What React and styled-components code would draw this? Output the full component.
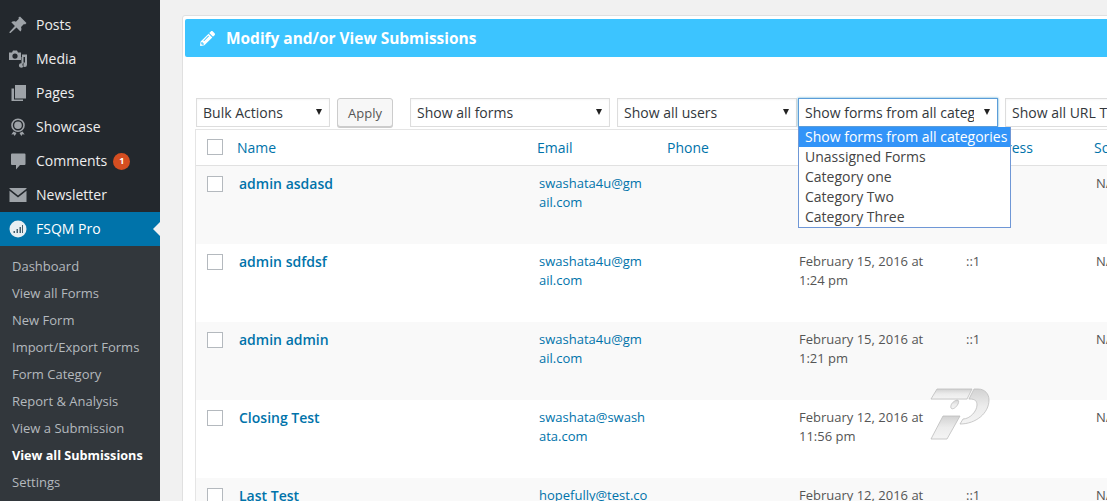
import React from "react";
import styled, { createGlobalStyle } from "styled-components";
import { FaPencilAlt } from "react-icons/fa";

const Global = createGlobalStyle`
  html, body { margin: 0; padding: 0; height: 100%; overflow: hidden; background: #f1f1f1; }
  #root { height: 501px; width: 1107px; overflow: hidden; }
  * { box-sizing: border-box; }
`;

const Page = styled.div`
  display: flex; position: relative; width: 1107px; height: 501px; overflow: hidden;
  font-family: "Open Sans", sans-serif; font-size: 14px; color: #444;
`;
const Sidebar = styled.nav`
  width: 160px; flex: none; background: #23282d; padding-top: 8px; display: flex; flex-direction: column;
`;
const MenuItem = styled.div`
  height: 34px; display: flex; align-items: center; position: relative; padding-left: 9px; gap: 9px;
  color: ${p => (p.$active ? "#fff" : "#eee")}; background: ${p => (p.$active ? "#0073aa" : "transparent")};
  font-size: 14px; line-height: 18px;
`;
const MenuIcon = styled.svg`
  width: 18px; height: 18px; flex: none; fill: #9ea3a8;
`;
const Badge = styled.span`
  width: 17px; height: 17px; border-radius: 50%; background: #d54e21; color: #fff;
  font-size: 9px; font-weight: 700; display: flex; align-items: center; justify-content: center; margin-left: -3px;
`;
const Notch = styled.span`
  position: absolute; right: 0; top: 10px; width: 0; height: 0;
  border: 7px solid transparent; border-right-color: #f1f1f1; border-left-width: 0;
`;
const SubMenu = styled.div`
  background: #32373c; padding-top: 7px; flex: 1;
`;
const SubItem = styled.div`
  height: 27px; line-height: 27px; padding-left: 12px; font-size: ${p => (p.$current ? "12.65px" : "13px")};
  color: ${p => (p.$current ? "#fff" : "#b4b9be")}; font-weight: ${p => (p.$current ? 700 : 400)};
`;
const Main = styled.main`
  flex: 1; min-width: 0; padding: 15px 0 0 22px;
`;
const Panel = styled.section`
  width: 960px; height: 600px; background: #fff; border: 1px solid #e0e0e0; border-radius: 3px; padding: 3px 0 0 2px;
`;
const PanelHeader = styled.header`
  height: 38px; background: #3cc4ff; border-radius: 2px; color: #fff; display: flex; align-items: center;
  padding-left: 15px; gap: 11px; font-size: 15.45px; font-weight: 700;
  svg { width: 15px; height: 15px; }
`;
const Toolbar = styled.div`
  display: flex; align-items: flex-start; margin: 41px 0 0 11px; height: 31px;
`;
const Select = styled.div`
  width: ${p => p.$w}px; height: 29px; flex: none; margin-left: ${p => p.$ml || 0}px;
  background: #fff; border: 1px solid ${p => (p.$focus ? "#5b9dd9" : "#ddd")};
  box-shadow: ${p => (p.$focus ? "0 0 2px rgba(30,140,190,.8)" : "inset 0 1px 2px rgba(0,0,0,.04)")};
  display: flex; align-items: center; padding: 0 6px; position: relative; color: #32373c; font-size: 14px; white-space: nowrap; overflow: hidden;
`;
const SelectText = styled.span`
  overflow: hidden; width: ${p => p.$tw || "auto"};
`;
const Arrow = styled.span`
  position: absolute; right: 7px; top: 10px; width: 0; height: 0;
  border-left: 3.5px solid transparent; border-right: 3.5px solid transparent; border-top: 6px solid #222;
`;
const ApplyButton = styled.div`
  width: 56px; height: 29px; margin-left: 7px; flex: none; border: 1px solid #ccc; border-radius: 3px; background: #f7f7f7;
  box-shadow: 0 1px 0 #ccc; color: #555; font-size: 13px; display: flex; align-items: center; justify-content: center;
`;
const Table = styled.div`
  margin-left: 10px; border-left: 1px solid #e5e5e5; border-top: 1px solid #e5e5e5;
`;
const cols = "41px 300px 130px 130px 167px 130px 100px";
const HeadRow = styled.div`
  display: grid; grid-template-columns: ${cols}; height: 36px; border-bottom: 1px solid #e1e1e1; align-items: center; color: #0073aa; font-size: 14px;
`;
const Row = styled.div`
  display: grid; grid-template-columns: ${cols}; height: 78px; background: ${p => (p.$alt ? "#f9f9f9" : "#fff")}; padding-top: 8px; font-size: 13px; line-height: 19px;
`;
const Check = styled.span`
  display: block; width: 16px; height: 16px; background: #fff; border: 1px solid #b4b9be; margin-left: 11px;
  margin-top: ${p => (p.$head ? "-2px" : "2px")};
`;
const RowName = styled.div`
  padding-left: 2px; color: #0073aa; font-weight: 600; font-size: 14px; line-height: 20px;
`;
const EmailCell = styled.div`
  padding: 0 18px 0 2px; color: #0073aa; word-break: break-all;
`;
const DateCell = styled.div`
  padding: 0 30px 0 2px; color: #555;
`;
const PlainCell = styled.div`
  padding: 0 0 0 2px; color: #555;
`;
const Dropdown = styled.div`
  position: absolute; left: 798px; top: 127px; width: 213px; height: 101px; background: #fff;
  border: 1px solid #6f97d6; border-top: none; color: #444; font-size: 14px; line-height: 20px;
`;
const Option = styled.div`
  height: 20px; padding-left: 6px; white-space: nowrap;
  background: ${p => (p.$sel ? "#3294f8" : "transparent")}; color: ${p => (p.$sel ? "#fff" : "#444")};
`;
const Watermark = styled.svg`
  position: absolute; left: 930px; top: 387px; width: 62px; height: 56px;
`;

const icons = {
  posts: <path d="M11 0.500l6.500 6.500-1.500 1.500-1-.6-3 3c.8 2 .5 3.400-.6 4.600L7.500 11.600 1.500 17H0.500v-1l5.400-6-3.600-3.700c1.200-1.100 2.800-1.300 4.600-.6l3-3-.6-1z" />,
  media: <path fillRule="evenodd" d="M0 2.500h3L4 .5h4l1 2h3V10H0zM6 3.500a2.600 2.600 0 100 5.200 2.600 2.600 0 000-5.200zM13 4.500h5v10.200a2.300 2.200 0 11-2-2.200V7h-1.500v8.500a2.300 2.200 0 11-2-2.200V7H13z" />,
  pages: <path d="M6 1h11v13.500H6zM2.500 4.500H5v11h9V17H2.500z" />,
  show: <path fillRule="evenodd" d="M9 0.500a6.800 6.800 0 110 13.600A6.800 6.800 0 019 .5zm0 1.600a5.200 5.200 0 100 10.400A5.200 5.200 0 009 2.100zm0 1.400a3.800 3.800 0 110 7.600 3.800 3.800 0 010-7.600zM4.500 13.500l3 1.400L5.700 18l-1.200-1.800-2.200.4zm9 0l2.200 3.100-2.200-.4L12.300 18l-1.800-3.100z" />,
  comments: <path d="M3 1.500h12.500a1 1 0 011 1v9.500a1 1 0 01-1 1H11l-4 4.500V13H3a1 1 0 01-1-1V2.500a1 1 0 011-1z" />,
  mail: <path d="M0.500 2h17v.8L9 9.500 .5 2.800zM.5 4.800L9 11.500l8.500-6.700V16H.5z" />,
};

const subItems = ["Dashboard", "View all Forms", "New Form", "Import/Export Forms", "Form Category", "Report & Analysis", "View a Submission", "View all Submissions", "Settings"];

const rows = [
  { name: "admin asdasd", email: "swashata4u@gmail.com", date: "", ip: "", alt: true },
  { name: "admin sdfdsf", email: "swashata4u@gmail.com", date: "February 15, 2016 at 1:24 pm", ip: "::1" },
  { name: "admin admin", email: "swashata4u@gmail.com", date: "February 15, 2016 at 1:21 pm", ip: "::1", alt: true },
  { name: "Closing Test", email: "swashata@swashata.com", date: "February 12, 2016 at 11:56 pm", ip: "" },
  { name: "Last Test", email: "hopefully@test.com", date: "February 12, 2016 at 11:50 pm", ip: "::1", alt: true },
];

export default function App() {
  return (
    <Page>
      <Global />
      <Sidebar>
        {[["Posts", "posts"], ["Media", "media"], ["Pages", "pages"], ["Showcase", "show"], ["Comments", "comments"], ["Newsletter", "mail"]].map(([t, i]) => (
          <MenuItem key={t}>
            <MenuIcon viewBox="0 0 18 18">{icons[i]}</MenuIcon>
            {t}
            {t === "Comments" && <Badge>1</Badge>}
          </MenuItem>
        ))}
        <MenuItem $active>
          <MenuIcon viewBox="0 0 18 18">
            <circle cx="9" cy="9" r="8.500" fill="#e8eef2" />
            <path d="M4.500 13h1.500v-2H4.500zM7.500 13H9V9H7.500zM10.500 13H12V7h-1.500zM13 13h1V5h-1z" fill="#45606e" />
          </MenuIcon>
          FSQM Pro
          <Notch />
        </MenuItem>
        <SubMenu>
          {subItems.map(s => <SubItem key={s} $current={s === "View all Submissions"}>{s}</SubItem>)}
        </SubMenu>
      </Sidebar>
      <Main>
        <Panel>
          <PanelHeader><FaPencilAlt />Modify and/or View Submissions</PanelHeader>
          <Toolbar>
            <Select $w={134}>Bulk Actions<Arrow /></Select>
            <ApplyButton>Apply</ApplyButton>
            <Select $w={200} $ml={17}>Show all forms<Arrow /></Select>
            <Select $w={180} $ml={7}>Show all users<Arrow /></Select>
            <Select $w={200} $ml={1} $focus><SelectText $tw="169px">Show forms from all categories</SelectText><Arrow /></Select>
            <Select $w={200} $ml={7}>Show all URL Tracks</Select>
          </Toolbar>
          <Table>
            <HeadRow>
              <Check $head />
              <span>Name</span><span>Email</span><span>Phone</span><span>Date</span><span>IP Address</span><span>Source</span>
            </HeadRow>
            {rows.map(r => (
              <Row key={r.name} $alt={r.alt}>
                <Check />
                <RowName>{r.name}</RowName>
                <EmailCell>{r.email}</EmailCell>
                <div />
                <DateCell>{r.date}</DateCell>
                <PlainCell>{r.ip}</PlainCell>
                <PlainCell>N/A</PlainCell>
              </Row>
            ))}
          </Table>
        </Panel>
      </Main>
      <Dropdown>
        <Option $sel>Show forms from all categories</Option>
        <Option>Unassigned Forms</Option>
        <Option>Category one</Option>
        <Option>Category Two</Option>
        <Option>Category Three</Option>
      </Dropdown>
      <Watermark viewBox="0 0 62 56">
        <defs>
          <linearGradient id="wm" x1="0" y1="0" x2="0" y2="1">
            <stop offset="0" stopColor="#d2d2d2" />
            <stop offset="0.5" stopColor="#ececec" />
            <stop offset="1" stopColor="#f4f4f4" />
          </linearGradient>
        </defs>
        <g fill="url(#wm)" stroke="#bdbdbd" strokeWidth=".8">
          <path d="M7 2h35l-5 10H1z" />
          <path d="M44 2h4c7 0 11 5 11 11 0 13-13 24-29 24l3-5c7 0 14-8 14-14 0-4-2-6-7-6h-1z" />
          <path d="M27 13c2 0 2 2 1 4-2 4-6 6-7 4-1-3 2-7 6-8z" />
          <path d="M13 29h17L17 52H1z" />
        </g>
      </Watermark>
    </Page>
  );
}
